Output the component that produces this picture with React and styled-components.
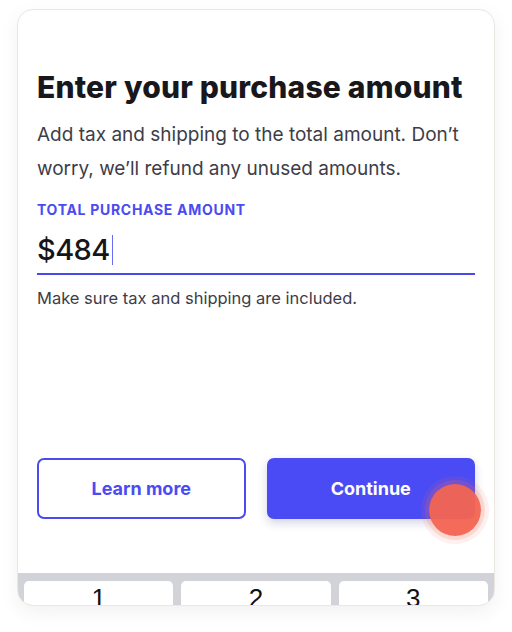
import React from "react";
import styled, { createGlobalStyle } from "styled-components";

const GlobalStyle = createGlobalStyle`
  html, body {
    margin: 0;
    padding: 0;
    background: #ffffff;
    font-family: "Inter", "Liberation Sans", sans-serif;
  }
`;

const Page = styled.div`
  width: 512px;
  height: 632px;
  padding: 9px 0 0 17px;
  box-sizing: border-box;
`;

const Card = styled.div`
  position: relative;
  width: 478px;
  height: 597px;
  box-sizing: border-box;
  border: 1px solid #ebe7e3;
  border-radius: 16px;
  background: #fff;
  box-shadow: 0 6px 20px rgba(0, 0, 0, 0.06);
  overflow: hidden;
  display: flex;
  flex-direction: column;
`;

const Content = styled.div`
  flex: 1;
  padding: 57px 19px 0 19px;
  display: flex;
  flex-direction: column;
`;

const Title = styled.h1`
  margin: 0;
  font-size: 30px;
  font-weight: 800;
  letter-spacing: 0.2px;
  line-height: 40px;
  color: #17171c;
`;

const Lead = styled.p`
  margin: 11px 0 0;
  font-size: 19px;
  line-height: 34px;
  color: #3d3d48;
`;

const FieldLabel = styled.div`
  margin-top: 15px;
  font-size: 14px;
  font-weight: 700;
  letter-spacing: 0.7px;
  color: #4b4bf2;
  line-height: 18px;
`;

const AmountRow = styled.div`
  display: flex;
  align-items: center;
  height: 47px;
  margin-top: 7px;
  border-bottom: 2px solid #4848ee;
`;

const Amount = styled.span`
  font-size: 29px;
  font-weight: 500;
  color: #15151a;
  letter-spacing: -0.6px;
`;

const Caret = styled.span`
  width: 1.5px;
  height: 30px;
  margin-left: 2px;
  background: #6a6af5;
`;

const Helper = styled.div`
  margin-top: 12px;
  font-size: 16.5px;
  color: #3d3d48;
  line-height: 22px;
`;

const Actions = styled.div`
  margin-top: auto;
  margin-bottom: 54px;
  display: grid;
  grid-template-columns: 1fr 1fr;
  gap: 21px;
`;

const Button = styled.button`
  height: 61px;
  border-radius: 7px;
  font-family: inherit;
  font-size: 18px;
  font-weight: 700;
  cursor: pointer;
  border: 2px solid #4b4bf2;
  background: ${(p) => (p.$primary ? "#4b4bf5" : "#fff")};
  color: ${(p) => (p.$primary ? "#fff" : "#4b4bf2")};
  box-shadow: ${(p) => (p.$primary ? "0 4px 10px rgba(40, 40, 120, 0.2)" : "none")};
`;

const Keyboard = styled.div`
  height: 32px;
  box-sizing: border-box;
  background: #d1d3d9;
  padding: 8px 6px 0;
  display: grid;
  grid-template-columns: repeat(3, 1fr);
  gap: 8px;
  overflow: hidden;
`;

const Key = styled.div`
  background: #fff;
  border-radius: 5px 5px 0 0;
  height: 40px;
  text-align: center;
  font-size: 26px;
  line-height: 30px;
  color: #111;
  font-family: "Liberation Sans", sans-serif;
  padding-top: 2px;
`;

const Touch = styled.div`
  position: absolute;
  left: 411px;
  top: 474px;
  width: 52px;
  height: 52px;
  border-radius: 50%;
  background: rgba(243, 100, 80, 0.95);
  box-shadow: 0 0 0 4px rgba(243, 110, 90, 0.18), 0 0 0 8px rgba(243, 110, 90, 0.1);
`;

export default function App() {
  return (
    <>
      <GlobalStyle />
      <Page>
        <Card>
          <Content>
            <Title>Enter your purchase amount</Title>
            <Lead>
              Add tax and shipping to the total amount. Don’t worry, we’ll
              refund any unused amounts.
            </Lead>
            <FieldLabel>TOTAL PURCHASE AMOUNT</FieldLabel>
            <AmountRow>
              <Amount>$484</Amount>
              <Caret />
            </AmountRow>
            <Helper>Make sure tax and shipping are included.</Helper>
            <Actions>
              <Button>Learn more</Button>
              <Button $primary>Continue</Button>
            </Actions>
          </Content>
          <Keyboard>
            <Key>1</Key>
            <Key>2</Key>
            <Key>3</Key>
          </Keyboard>
          <Touch />
        </Card>
      </Page>
    </>
  );
}
